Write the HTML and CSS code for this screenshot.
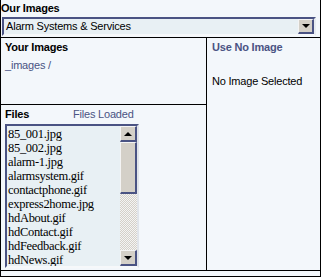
FILE: index.html
```html
<!DOCTYPE html>
<html>
<head>
<meta charset="utf-8">
<link rel="stylesheet" href="styles.css">
</head>
<body>
<div class="panel">
  <div class="head">Our Images</div>
  <div class="select">
    <span class="select-text">Alarm Systems &amp; Services</span>
    <span class="btn"><span class="tri-down"></span></span>
  </div>
  <div class="cols">
    <div class="left">
      <div class="your">
        <div class="title">Your Images</div>
        <div class="path"><span class="link">_images</span> /</div>
      </div>
      <div class="files">
        <div class="files-head"><span class="title label">Files</span><span class="loaded">Files Loaded</span></div>
        <div class="listbox">
          <ul class="items">
            <li>85_001.jpg</li>
            <li>85_002.jpg</li>
            <li>alarm-1.jpg</li>
            <li>alarmsystem.gif</li>
            <li>contactphone.gif</li>
            <li>express2home.jpg</li>
            <li>hdAbout.gif</li>
            <li>hdContact.gif</li>
            <li>hdFeedback.gif</li>
            <li>hdNews.gif</li>
          </ul>
          <div class="scrollbar">
            <div class="sb-btn"><span class="tri-up"></span></div>
            <div class="sb-thumb"></div>
            <div class="sb-track"></div>
            <div class="sb-btn"><span class="tri-down"></span></div>
          </div>
        </div>
      </div>
    </div>
    <div class="right">
      <div class="title slate">Use No Image</div>
      <div class="none">No Image Selected</div>
    </div>
  </div>
  <div class="foot"></div>
</div>
</body>
</html>
```

FILE: styles.css
```css
html, body {
  margin: 0;
  padding: 0;
  background: #f3f7fb;
}
body {
  font-family: "Liberation Sans", Arial, sans-serif;
  font-size: 11px;
  letter-spacing: -0.2px;
  color: #000;
}
.panel {
  box-sizing: border-box;
  width: 321px;
  border-left: 1px solid #000;
  border-right: 1px solid #000;
  border-bottom: 1px solid #000;
}
.head {
  font-weight: bold;
  line-height: 13px;
  padding-top: 2px;
  height: 15px;
  box-sizing: border-box;
}
.select {
  box-sizing: border-box;
  margin: 2px 0 1px 1px;
  width: 314px;
  height: 19px;
  border: 2px solid;
  border-color: #4a5383 #e6ebf0 #f6f8fa #4a5383;
  background: #e8f0f4;
  display: flex;
  align-items: center;
  justify-content: space-between;
  padding-left: 2px;
  line-height: 15px;
}
.btn {
  box-sizing: border-box;
  width: 16px;
  height: 15px;
  background: #d4d0c8;
  border-style: solid;
  border-width: 1px 2px 2px 1px;
  border-color: #f4f4f4 #4a5383 #4a5383 #f4f4f4;
  display: flex;
  align-items: center;
  justify-content: center;
}
.tri-down {
  width: 0;
  height: 0;
  border-left: 4px solid transparent;
  border-right: 4px solid transparent;
  border-top: 4px solid #000;
}
.tri-up {
  width: 0;
  height: 0;
  border-left: 4px solid transparent;
  border-right: 4px solid transparent;
  border-bottom: 4px solid #000;
}
.cols {
  display: grid;
  grid-template-columns: 206px 1fr;
  border-top: 1px solid #000;
  border-bottom: 1px solid #000;
}
.left {
  border-right: 1px solid #000;
  display: flex;
  flex-direction: column;
}
.title {
  font-weight: bold;
  line-height: 13px;
}
.slate, .link, .path, .loaded {
  color: #4a5383;
}
.your {
  box-sizing: border-box;
  height: 67px;
  border-bottom: 1px solid #000;
  padding: 3px 0 0 4px;
}
.path {
  margin-top: 5px;
  line-height: 13px;
}
.files {
  padding: 3px 0 2px 4px;
}
.files-head {
  display: flex;
  line-height: 13px;
}
.label {
  width: 68px;
}
.listbox {
  box-sizing: border-box;
  margin-top: 3px;
  width: 134px;
  height: 144px;
  border: 2px solid;
  border-color: #4a5383 #e0e4ea #f6f8fa #4a5383;
  background: #e8f0f4;
  display: flex;
  overflow: hidden;
}
.items {
  list-style: none;
  margin: 0;
  padding: 1px 0 0 1px;
  flex: 1;
  font-family: "Liberation Serif", "Times New Roman", serif;
  font-size: 12.5px;
  letter-spacing: -0.3px;
  line-height: 14px;
  white-space: nowrap;
  overflow: hidden;
}
.scrollbar {
  width: 17px;
  display: flex;
  flex-direction: column;
}
.sb-btn {
  box-sizing: border-box;
  height: 16px;
  background: #d4d0c8;
  border-style: solid;
  border-width: 1px 2px 2px 1px;
  border-color: #f4f4f4 #4a5383 #4a5383 #f4f4f4;
  display: flex;
  align-items: center;
  justify-content: center;
  flex: none;
}
.sb-thumb {
  box-sizing: border-box;
  height: 52px;
  background: #d4d0c8;
  border-style: solid;
  border-width: 1px 2px 2px 1px;
  border-color: #f4f4f4 #4a5383 #4a5383 #f4f4f4;
  flex: none;
}
.sb-track {
  flex: 1;
  background: repeating-conic-gradient(#d4d0c8 0 25%, #f4f4f4 0 50%) 0 0 / 2px 2px;
}
.right {
  padding: 3px 0 0 5px;
}
.none {
  margin-top: 21px;
  line-height: 13px;
}
.foot {
  height: 5px;
}
```
